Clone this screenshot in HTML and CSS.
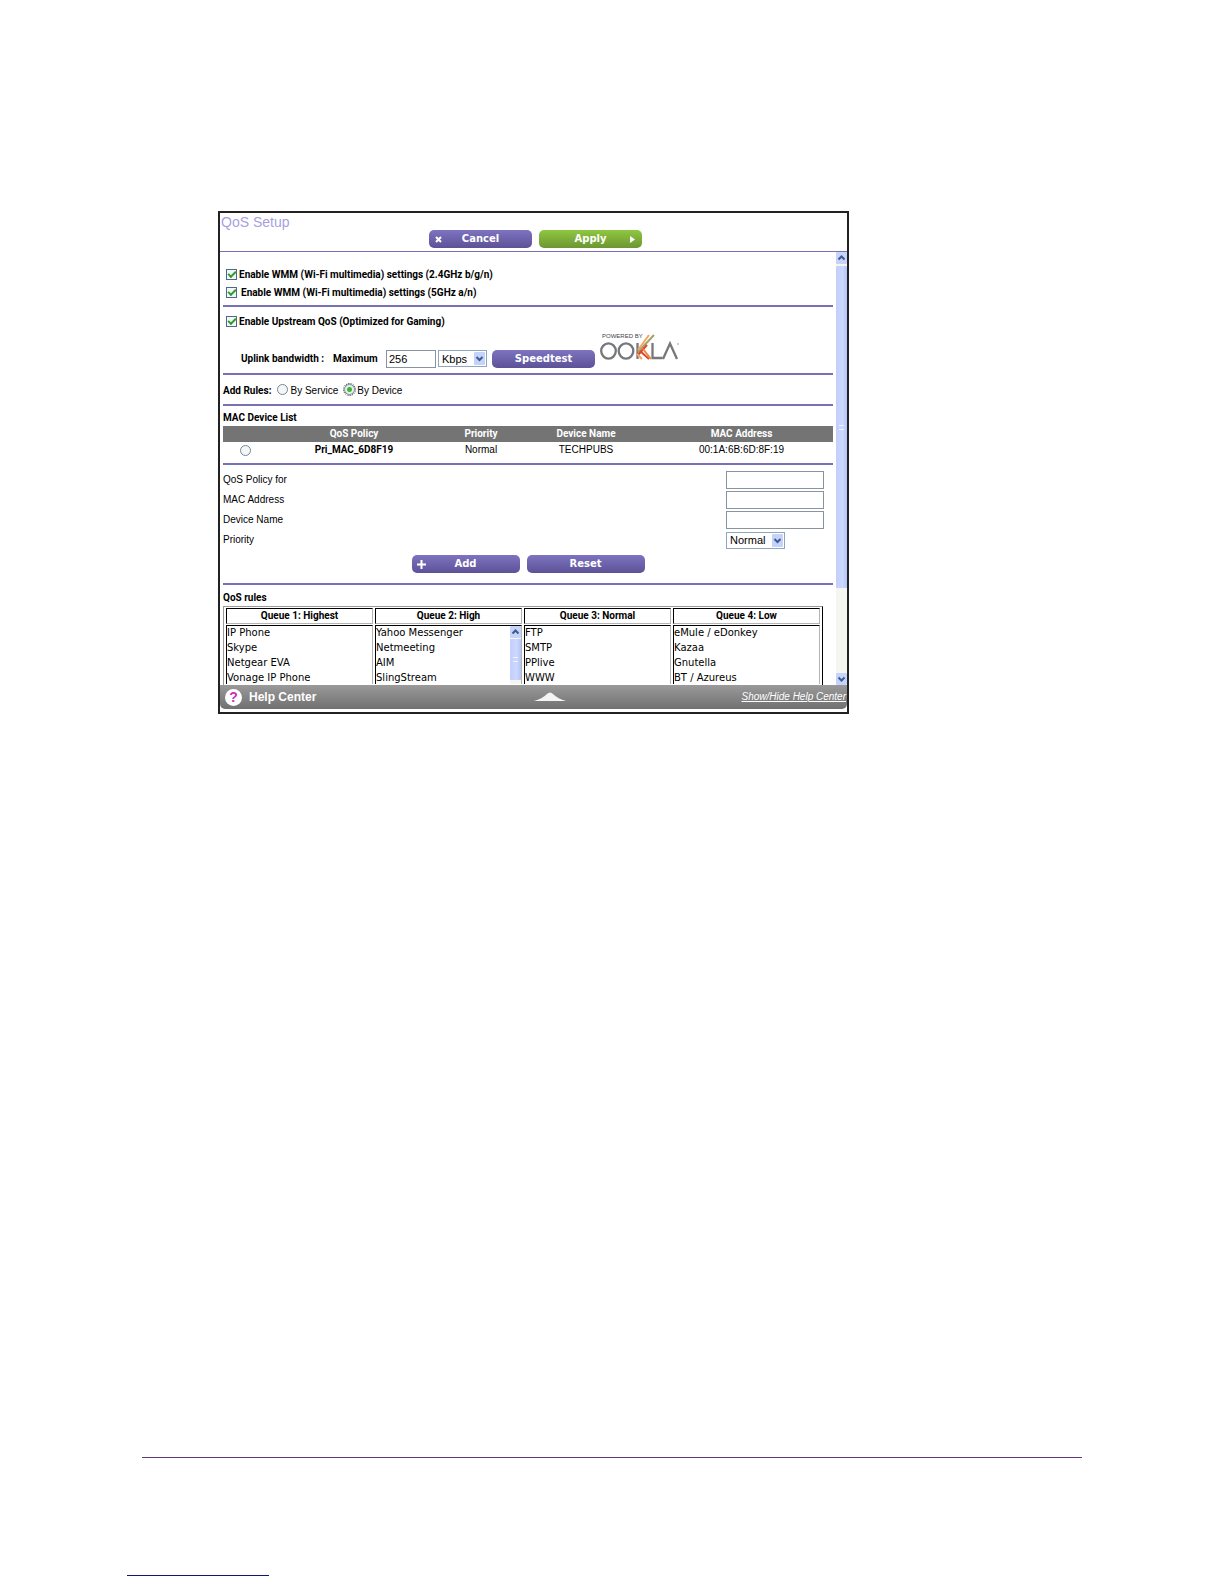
FILE: index.html
```html
<!DOCTYPE html>
<html lang="en">
  <head>
    <meta charset="UTF-8" />
    <meta name="viewport" content="width=device-width, initial-scale=1.0" />
    <title>QoS Setup</title>
    <link rel="stylesheet" href="styles.css">
  </head>
  <body>
    <main class="page">
      <div class="panel">
        <header class="panel-header">
          <h1>QoS Setup</h1>
          <div class="actions">
            <button class="btn" type="button">
              <svg class="icon-left" width="9" height="9" viewBox="0 0 9 9"><path d="M2 2l5 5M7 2l-5 5" stroke="#fff" stroke-width="2" /></svg>
              Cancel
            </button>
            <button class="btn apply" type="button">
              Apply
              <svg class="icon-right" width="9" height="9" viewBox="0 0 9 9"><path d="M2 1l5 3.5L2 8z" fill="#fff" /></svg>
            </button>
          </div>
        </header>

        <div class="panel-body">
          <form class="content">
            <section class="wmm">
              <div class="check-row">
                <input type="checkbox" id="wmm24" checked />
                <label for="wmm24">Enable WMM (Wi-Fi multimedia) settings (2.4GHz b/g/n)</label>
              </div>
              <div class="check-row spaced">
                <input type="checkbox" id="wmm5" checked />
                <label for="wmm5">Enable WMM (Wi-Fi multimedia) settings (5GHz a/n)</label>
              </div>
            </section>

            <section class="upstream">
              <div class="check-row">
                <input type="checkbox" id="upstream" checked />
                <label for="upstream">Enable Upstream QoS (Optimized for Gaming)</label>
              </div>
              <div class="uplink-row">
                <span class="uplink-label">Uplink bandwidth :</span>
                <label class="max-label" for="bandwidth">Maximum</label>
                <input class="text-box bandwidth" type="text" id="bandwidth" value="256" />
                <span class="select unit">
                  <select aria-label="Unit"><option>Kbps</option><option>Mbps</option></select>
                  <svg width="11" height="13" viewBox="0 0 11 13"><rect width="11" height="13" rx="1" fill="#c3d3fb" /><path d="M2.500 5l3 3 3-3" fill="none" stroke="#3f5a8c" stroke-width="2" /></svg>
                </span>
                <button class="btn speedtest" type="button">Speedtest</button>
                <div class="ookla">
                  <span class="powered">POWERED BY</span>
                  <svg width="80" height="28" viewBox="0 0 80 28" role="img" aria-label="OOKLA">
                    <g fill="none" stroke="#77787b" stroke-width="2.300">
                      <ellipse cx="8.500" cy="18" rx="7.300" ry="7.600" />
                      <ellipse cx="26" cy="18" rx="7.300" ry="7.600" />
                      <path d="M37.500 10v16" />
                      <path d="M52.500 10v15h10" />
                      <path d="M63 26l7-15.500 7 15.500" />
                    </g>
                    <g fill="none" stroke-width="2">
                      <path d="M38 19L54 2" stroke="#a9a06a" />
                      <path d="M38 17L49 2" stroke="#f2a65a" />
                      <path d="M38 22l9-10" stroke="#d9472f" />
                      <path d="M40 18l9 8" stroke="#d9472f" />
                      <path d="M43 16l8 10" stroke="#f0883e" />
                      <path d="M37 21l5 5" stroke="#f2a65a" />
                    </g>
                    <circle cx="78" cy="11" r="0.700" fill="#77787b" />
                  </svg>
                </div>
              </div>
            </section>

            <section class="add-rules">
              <b>Add Rules:</b>
              <input type="radio" name="rule" id="byService" />
              <label for="byService">By Service</label>
              <input class="focused" type="radio" name="rule" id="byDevice" checked />
              <label for="byDevice">By Device</label>
            </section>

            <section class="devices">
              <h2>MAC Device List</h2>
              <table class="device-table">
                <colgroup>
                  <col class="col-pick" />
                  <col class="col-policy" />
                  <col class="col-priority" />
                  <col class="col-device" />
                  <col />
                </colgroup>
                <thead>
                  <tr>
                    <th></th>
                    <th>QoS Policy</th>
                    <th>Priority</th>
                    <th>Device Name</th>
                    <th>MAC Address</th>
                  </tr>
                </thead>
                <tbody>
                  <tr>
                    <td><input type="radio" name="device" aria-label="Pri_MAC_6D8F19" /></td>
                    <td><b>Pri_MAC_6D8F19</b></td>
                    <td>Normal</td>
                    <td>TECHPUBS</td>
                    <td>00:1A:6B:6D:8F:19</td>
                  </tr>
                </tbody>
              </table>
            </section>

            <section class="policy">
              <div class="field">
                <label for="policyFor">QoS Policy for</label>
                <div class="control"><input class="text-box" type="text" id="policyFor" /></div>
              </div>
              <div class="field">
                <label for="macAddress">MAC Address</label>
                <div class="control"><input class="text-box" type="text" id="macAddress" /></div>
              </div>
              <div class="field">
                <label for="deviceName">Device Name</label>
                <div class="control"><input class="text-box" type="text" id="deviceName" /></div>
              </div>
              <div class="field">
                <label for="priority">Priority</label>
                <div class="control">
                  <span class="select">
                    <select id="priority"><option>Normal</option><option>Highest</option><option>High</option><option>Low</option></select>
                    <svg width="11" height="13" viewBox="0 0 11 13"><rect width="11" height="13" rx="1" fill="#c3d3fb" /><path d="M2.500 5l3 3 3-3" fill="none" stroke="#3f5a8c" stroke-width="2" /></svg>
                  </span>
                </div>
              </div>
              <div class="form-buttons">
                <button class="btn add" type="button">
                  <svg class="icon-left" width="9" height="9" viewBox="0 0 9 9"><path d="M4.500 0v9M0 4.500h9" stroke="#fff" stroke-width="2" /></svg>
                  Add
                </button>
                <button class="btn reset" type="reset">Reset</button>
              </div>
            </section>

            <section class="rules">
              <h2>QoS rules</h2>
              <table class="rules-table">
                <thead>
                  <tr>
                    <th>Queue 1: Highest</th>
                    <th>Queue 2: High</th>
                    <th>Queue 3: Normal</th>
                    <th>Queue 4: Low</th>
                  </tr>
                </thead>
                <tbody>
                  <tr>
                    <td>
                      <ul><li>IP Phone</li><li>Skype</li><li>Netgear EVA</li><li>Vonage IP Phone</li></ul>
                    </td>
                    <td>
                      <div class="scroll-list">
                        <ul><li>Yahoo Messenger</li><li>Netmeeting</li><li>AIM</li><li>SlingStream</li></ul>
                        <div class="scrollbar">
                          <svg class="arrow" width="11" height="12" viewBox="0 0 11 12"><path d="M2.500 7.500l3-3 3 3" fill="none" stroke="#3f5a8c" stroke-width="2" /></svg>
                          <div class="thumb"><span class="grip"></span></div>
                        </div>
                      </div>
                    </td>
                    <td>
                      <ul><li>FTP</li><li>SMTP</li><li>PPlive</li><li>WWW</li></ul>
                    </td>
                    <td>
                      <ul><li>eMule / eDonkey</li><li>Kazaa</li><li>Gnutella</li><li>BT / Azureus</li></ul>
                    </td>
                  </tr>
                </tbody>
              </table>
            </section>
          </form>

          <div class="scrollbar main-scroll">
            <svg class="arrow" width="11" height="12" viewBox="0 0 11 12"><path d="M2.500 7.500l3-3 3 3" fill="none" stroke="#3f5a8c" stroke-width="2" /></svg>
            <div class="thumb"><span class="grip"></span></div>
            <div class="track"></div>
            <svg class="arrow" width="11" height="12" viewBox="0 0 11 12"><path d="M2.500 4.500l3 3 3-3" fill="none" stroke="#3f5a8c" stroke-width="2" /></svg>
          </div>
        </div>

        <footer class="help-bar">
          <div class="help-title"><span class="help-icon">?</span>Help Center</div>
          <svg class="help-arrow" width="32" height="10" viewBox="0 0 32 10"><path d="M0 9Q8 7 13 2q3-3 6 0 5 5 13 7z" fill="#f4f4f4" /></svg>
          <a href="#">Show/Hide Help Center</a>
        </footer>
      </div>
    </main>

    <footer class="page-footer">
      <hr class="rule" />
      <div class="link-line"></div>
    </footer>
  </body>
</html>
```

FILE: styles.css
```css
:root {
  --purple: #7870b4;
  --arrow-blue: #c6d4fb;
}

* {
  box-sizing: border-box;
}

body {
  margin: 0;
  min-height: 100vh;
  display: flex;
  flex-direction: column;
  justify-content: space-between;
  background: #fff;
  color: #000;
  font-family: "Liberation Sans", Arial, sans-serif;
  font-size: 10px;
  line-height: 14px;
}

.page {
  padding: 211px 142px 0 218px;
}

.panel {
  max-width: 631px;
  border: 2px solid #222;
  padding-bottom: 3px;
}

/* header */
.panel-header {
  padding: 2px 1px 3px;
  border-bottom: 1px solid var(--purple);
}

h1 {
  margin: 0;
  color: #a79fe0;
  font-size: 14px;
  font-weight: normal;
  line-height: 15px;
}

.actions {
  display: flex;
  justify-content: center;
  gap: 7px;
  padding-left: 4px;
}

.btn {
  display: block;
  position: relative;
  width: 103px;
  height: 18px;
  padding: 0;
  border: none;
  border-radius: 5px;
  background: linear-gradient(#7d73c0, #5d5297);
  color: #fff;
  font-family: "DejaVu Sans", Verdana, sans-serif;
  font-size: 10px;
  font-weight: bold;
  line-height: 18px;
  cursor: pointer;
}

.btn.apply {
  background: linear-gradient(#8fc740, #6c9632);
}

.icon-left,
.icon-right {
  position: absolute;
  top: 5px;
}

.icon-left {
  left: 5px;
}

.icon-right {
  right: 5px;
}

/* body */
.panel-body {
  display: flex;
}

.content {
  flex: 1;
  min-width: 0;
  padding: 0 3px;
}

section {
  border-bottom: 2px solid var(--purple);
}

h2 {
  margin: 0;
  font-size: 10px;
  line-height: 14px;
}

h2,
b,
th,
.check-row,
.uplink-row {
  font-family: Roboto, "Liberation Sans", sans-serif;
  font-weight: bold;
}

input[type="checkbox"],
input[type="radio"] {
  appearance: none;
  flex: none;
  margin: 0;
  width: 11px;
  height: 11px;
  border: 1px solid #4a6a8c;
  background: #f4f7f4;
}

input[type="checkbox"] {
  display: grid;
  place-items: center;
  margin-bottom: 2px;
}

input[type="checkbox"]:checked::before {
  content: "";
  width: 6px;
  height: 3px;
  border: solid #2f9a2f;
  border-width: 0 0 2px 2px;
  transform: translateY(-1px) rotate(-45deg);
}

input[type="radio"] {
  border-color: #7388a0;
  border-radius: 50%;
}

input[type="radio"]:checked {
  background: radial-gradient(circle, #3cb43c 0 2px, #e4f3e4 3px);
}

input.focused {
  outline: 1px dotted #333;
}

.check-row {
  display: flex;
  align-items: center;
  gap: 2px;
  padding-left: 3px;
  height: 18px;
}

.check-row.spaced {
  gap: 4px;
}

.wmm {
  padding: 14px 0 3px;
}

.upstream {
  padding: 6px 0 5px;
}

.uplink-row {
  display: flex;
  align-items: flex-end;
  height: 35px;
  margin-top: 2px;
  padding-left: 18px;
}

.uplink-label {
  flex: none;
  width: 92px;
  padding-bottom: 2px;
}

.max-label {
  width: 53px;
  padding-bottom: 2px;
}

.text-box {
  width: 98px;
  height: 18px;
  padding: 0 2px;
  border: 1px solid #8a93a0;
  background: #fff;
  font-family: "Liberation Sans", Arial, sans-serif;
  font-size: 11px;
}

.text-box.bandwidth {
  width: 50px;
}

.select {
  display: flex;
  align-items: center;
  position: relative;
  width: 59px;
  height: 17px;
  border: 1px solid #8fa5c0;
  background: #fff;
}

.select select {
  appearance: none;
  width: 100%;
  height: 100%;
  padding: 0 0 0 3px;
  border: none;
  background: none;
  font-family: "Liberation Sans", Arial, sans-serif;
  font-size: 11px;
  color: #000;
}

.select svg {
  position: absolute;
  right: 1px;
  pointer-events: none;
}

.select.unit {
  width: 49px;
  margin: 0 0 1px 2px;
}

.btn.speedtest {
  margin-left: 5px;
}

.ookla {
  position: relative;
  align-self: flex-start;
  margin-left: 5px;
  height: 28px;
}

.ookla svg {
  display: block;
}

.powered {
  position: absolute;
  left: 2px;
  top: 0;
  color: #444;
  font-family: "Liberation Sans", Arial, sans-serif;
  font-size: 6px;
  font-weight: normal;
  line-height: 7px;
}

.add-rules {
  display: flex;
  align-items: center;
  height: 31px;
  padding-top: 2px;
}

.add-rules input {
  margin: 0 2px 2px 6px;
}

.devices {
  padding-top: 5px;
}

.device-table {
  width: 100%;
  margin-top: 1px;
  border-collapse: collapse;
  table-layout: fixed;
  text-align: center;
}

.col-pick {
  width: 45px;
}

.col-policy {
  width: 172px;
}

.col-priority {
  width: 82px;
}

.col-device {
  width: 128px;
}

.device-table th {
  height: 16px;
  padding: 0;
  background: #747474;
  color: #fff;
}

.device-table td {
  height: 21px;
  padding: 0 0 6px;
}

.device-table input {
  display: block;
  margin: 2px auto 0;
}

/* policy form */
.policy {
  padding: 5px 0 10px;
}

.field {
  display: flex;
  justify-content: space-between;
  align-items: center;
  height: 20px;
}

.control {
  width: 107px;
}

.form-buttons {
  display: flex;
  justify-content: center;
  gap: 7px;
  margin-top: 5px;
}

.btn.add {
  width: 108px;
}

.btn.reset {
  width: 118px;
}

/* queues */
.rules {
  padding-top: 6px;
  border-bottom: none;
}

.rules-table {
  width: calc(100% - 10px);
  margin-top: 1px;
  border: 1px solid #999;
  border-right-color: #000;
  border-bottom: none;
  border-spacing: 2px 1px;
  table-layout: fixed;
}

.rules-table th,
.rules-table td {
  padding: 0;
  border: 1px solid #b4b4b4;
  border-top-color: #000;
  border-left-color: #000;
}

.rules-table th {
  height: 16px;
}

.rules-table td {
  border-bottom: none;
}

.rules-table ul {
  flex: 1;
  margin: -1px 0;
  padding: 0;
  list-style: none;
  font-family: "DejaVu Sans", Verdana, sans-serif;
  line-height: 15px;
}

.scroll-list {
  display: flex;
}

/* scrollbars */
.scrollbar {
  display: flex;
  flex-direction: column;
  width: 11px;
  background: #f6f6f0;
}

.arrow {
  display: block;
  flex: none;
  background: var(--arrow-blue);
  border-radius: 1px;
}

.thumb {
  display: flex;
  flex: 1;
  align-items: center;
  justify-content: center;
  margin: 1px 0 4px;
  border-radius: 1px;
  background: linear-gradient(90deg, #c3cffa, #cbd8ff 60%, #b4c6f4);
}

.grip {
  width: 5px;
  height: 5px;
  border: solid #eef3ff;
  border-width: 1px 0;
}

.main-scroll .thumb {
  flex: 322;
  margin: 2px 0 0;
}

.track {
  flex: 85;
}

/* help bar */
.help-bar {
  display: flex;
  align-items: center;
  justify-content: space-between;
  height: 24px;
  padding: 0 1px 0 5px;
  border-radius: 0 0 5px 5px;
  background: linear-gradient(#9a9a9a, #707070);
}

.help-title {
  display: flex;
  flex: 1;
  align-items: center;
  gap: 7px;
  color: #fff;
  font-size: 12px;
  font-weight: bold;
}

.help-icon {
  width: 17px;
  height: 17px;
  border-radius: 50%;
  background: #fff;
  color: #c832b4;
  font-size: 14px;
  line-height: 17px;
  text-align: center;
}

.help-arrow {
  margin-left: 28px;
}

.help-bar a {
  flex: 1;
  color: #fff;
  font-style: italic;
  text-align: right;
}

/* page footer */
.page-footer {
  padding-bottom: 8px;
}

.rule {
  margin: 0 142px 117px;
  border: none;
  border-top: 1px solid #5f3a78;
}

.link-line {
  width: 142px;
  margin-left: 127px;
  border-top: 1px solid #14147d;
}
```
